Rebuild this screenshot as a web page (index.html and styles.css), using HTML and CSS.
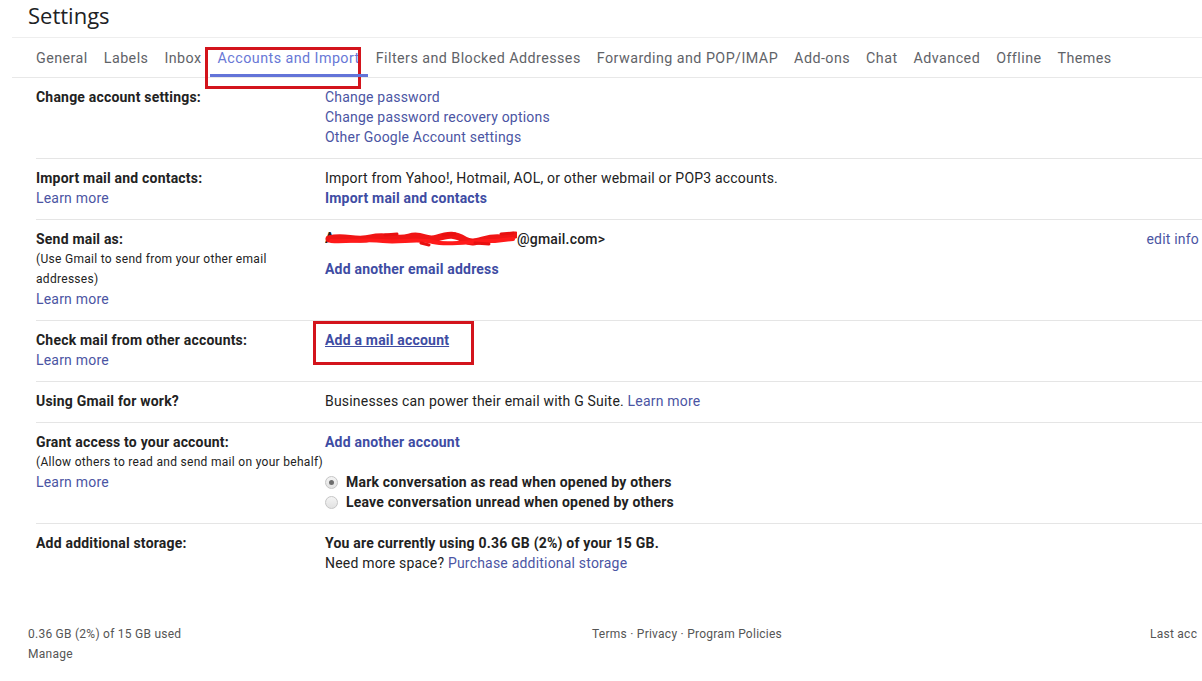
FILE: index.html
```html
<!DOCTYPE html>
<html>
<head>
<meta charset="utf-8">
<link rel="stylesheet" href="styles.css">
</head>
<body>
<div class="page">
  <h1 class="title">Settings</h1>
  <nav class="tabs">
    <a class="tab">General</a>
    <a class="tab">Labels</a>
    <a class="tab">Inbox</a>
    <a class="tab active">Accounts and Import<span class="mark mark-tab"></span></a>
    <a class="tab">Filters and Blocked Addresses</a>
    <a class="tab">Forwarding and POP/IMAP</a>
    <a class="tab">Add-ons</a>
    <a class="tab">Chat</a>
    <a class="tab">Advanced</a>
    <a class="tab">Offline</a>
    <a class="tab">Themes</a>
  </nav>

  <div class="rows">
    <div class="row">
      <div class="label"><b>Change account settings:</b></div>
      <div class="value">
        <a class="link">Change password</a><br>
        <a class="link">Change password recovery options</a><br>
        <a class="link">Other Google Account settings</a>
      </div>
    </div>

    <div class="row">
      <div class="label"><b>Import mail and contacts:</b><br><a class="link">Learn more</a></div>
      <div class="value">
        Import from Yahoo!, Hotmail, AOL, or other webmail or POP3 accounts.<br>
        <a class="link strong">Import mail and contacts</a>
      </div>
    </div>

    <div class="row">
      <div class="label">
        <b>Send mail as:</b>
        <div class="note narrow">(Use Gmail to send from your other email addresses)</div>
        <a class="link">Learn more</a>
      </div>
      <div class="value">
        <div class="email-line">
          <span class="email"><svg class="redact" width="192" height="18" viewBox="0 0 192 18"><text x="0" y="13" class="redact-letter">A</text><path d="M4 9 C20 5 30 12 46 8 S70 11 84 7 S100 12 112 8 S130 4 140 10 S160 6 176 8 L190 5" stroke="#f01515" stroke-width="7" fill="none" stroke-linecap="round"/><path d="M6 11 C24 12 40 9 58 11 S90 8 108 12 S150 10 170 11 L188 9" stroke="#ff1a1a" stroke-width="4" fill="none" stroke-linecap="round"/><path d="M60 5 L72 4 M96 13 L104 15 M118 5 L130 4 M150 13 L164 14 M176 4 L188 3" stroke="#e81010" stroke-width="3" fill="none" stroke-linecap="round"/></svg>@gmail.com&gt;</span>
          <a class="link edit">edit info</a>
        </div>
        <a class="link strong gap10">Add another email address</a>
      </div>
    </div>

    <div class="row">
      <div class="label"><b>Check mail from other accounts:</b><br><a class="link">Learn more</a></div>
      <div class="value">
        <a class="link strong underline boxed">Add a mail account<span class="mark mark-add"></span></a>
      </div>
    </div>

    <div class="row">
      <div class="label"><b>Using Gmail for work?</b></div>
      <div class="value">Businesses can power their email with G Suite. <a class="link">Learn more</a></div>
    </div>

    <div class="row">
      <div class="label">
        <b>Grant access to your account:</b>
        <div class="note">(Allow others to read and send mail on your behalf)</div>
        <a class="link">Learn more</a>
      </div>
      <div class="value">
        <a class="link strong">Add another account</a>
        <div class="radios">
          <label class="radio-line"><span class="radio checked"></span><b>Mark conversation as read when opened by others</b></label>
          <label class="radio-line"><span class="radio"></span><b>Leave conversation unread when opened by others</b></label>
        </div>
      </div>
    </div>

    <div class="row last">
      <div class="label"><b>Add additional storage:</b></div>
      <div class="value">
        <b>You are currently using 0.36 GB (2%) of your 15 GB.</b><br>
        Need more space? <a class="link">Purchase additional storage</a>
      </div>
    </div>
  </div>

  <footer class="footer">
    <div class="foot-col">0.36 GB (2%) of 15 GB used<br>Manage</div>
    <div class="foot-col">Terms · Privacy · Program Policies</div>
    <div class="foot-col">Last acc</div>
  </footer>
</div>
</body>
</html>
```

FILE: styles.css
```css
html, body {
  margin: 0;
  padding: 0;
  background: #fff;
  overflow: hidden;
}
body {
  width: 1202px;
  height: 681px;
  font-family: Roboto, "Liberation Sans", Arial, sans-serif;
  font-size: 14px;
  letter-spacing: 0.2px;
  color: #222;
}
.page {
  width: 1202px;
}
.title {
  margin: 0;
  padding-left: 28px;
  font-family: "Open Sans", Roboto, sans-serif;
  font-weight: 400;
  font-size: 22px;
  letter-spacing: 0;
  line-height: 30px;
  height: 37px;
  color: #202124;
}
.tabs {
  margin-left: 12px;
  border-top: 1px solid #eeeeee;
  border-bottom: 1px solid #e8e8e8;
  height: 39px;
  display: flex;
  align-items: stretch;
  padding-left: 16px;
  white-space: nowrap;
}
.tab {
  position: relative;
  display: flex;
  align-items: center;
  padding: 0 8px;
  font-family: Roboto, sans-serif;
  font-size: 14.3px;
  letter-spacing: 0.45px;
  color: #5f6368;
}
.tab.active {
  color: #6878d6;
}
.tab.active::after {
  content: "";
  position: absolute;
  left: 0;
  right: 0;
  bottom: 0;
  height: 3px;
  background: #6374d8;
}
.mark {
  position: absolute;
  border: 3px solid #d3141c;
  box-sizing: border-box;
  pointer-events: none;
}
.mark-tab {
  left: -5px;
  top: 9px;
  width: 156px;
  height: 42px;
}
.rows {
  margin-left: 36px;
}
.row {
  display: flex;
  padding: 9px 0 11px;
  border-bottom: 1px solid #e5e5e5;
  line-height: 20px;
}
.row.last {
  border-bottom: none;
}
.label {
  width: 289px;
  flex: none;
}
.label b, .value b {
  font-weight: 700;
}
.value {
  flex: 1;
  min-width: 0;
}
.note {
  font-size: 12px;
  letter-spacing: 0.3px;
  line-height: 20px;
  white-space: nowrap;
}
.note.narrow {
  white-space: normal;
  width: 245px;
}
.link {
  color: #4b55a3;
  text-decoration: none;
}
.link.strong {
  font-weight: 700;
  color: #3e4ca3;
}
.link.underline {
  text-decoration: underline;
}
.gap10 {
  display: inline-block;
  margin-top: 10px;
}
.email-line {
  display: flex;
  align-items: center;
}
.email {
  display: flex;
  align-items: center;
  font-weight: 500;
}
.redact {
  display: block;
}
.redact-letter {
  font-family: Roboto, sans-serif;
  font-size: 14px;
  font-weight: 700;
  fill: #222;
}
.edit {
  margin-left: auto;
  padding-right: 3px;
}
.boxed {
  position: relative;
}
.mark-add {
  left: -12px;
  top: -11px;
  width: 161px;
  height: 44px;
}
.radios {
  margin-top: 20px;
}
.radio-line {
  display: flex;
  align-items: center;
}
.radio {
  width: 11px;
  height: 11px;
  border-radius: 50%;
  border: 1px solid #c6c6c6;
  background: linear-gradient(#f4f4f4, #e2e2e2);
  margin: 0 8px 0 0;
  position: relative;
  flex: none;
}
.radio.checked::after {
  content: "";
  position: absolute;
  left: 3px;
  top: 3px;
  width: 5px;
  height: 5px;
  border-radius: 50%;
  background: #6d6d6d;
}
.footer {
  display: grid;
  grid-template-columns: 564px 558px auto;
  padding-left: 28px;
  margin-top: 40px;
  font-size: 12px;
  letter-spacing: 0.25px;
  line-height: 20px;
  color: #555;
  white-space: nowrap;
}
```
